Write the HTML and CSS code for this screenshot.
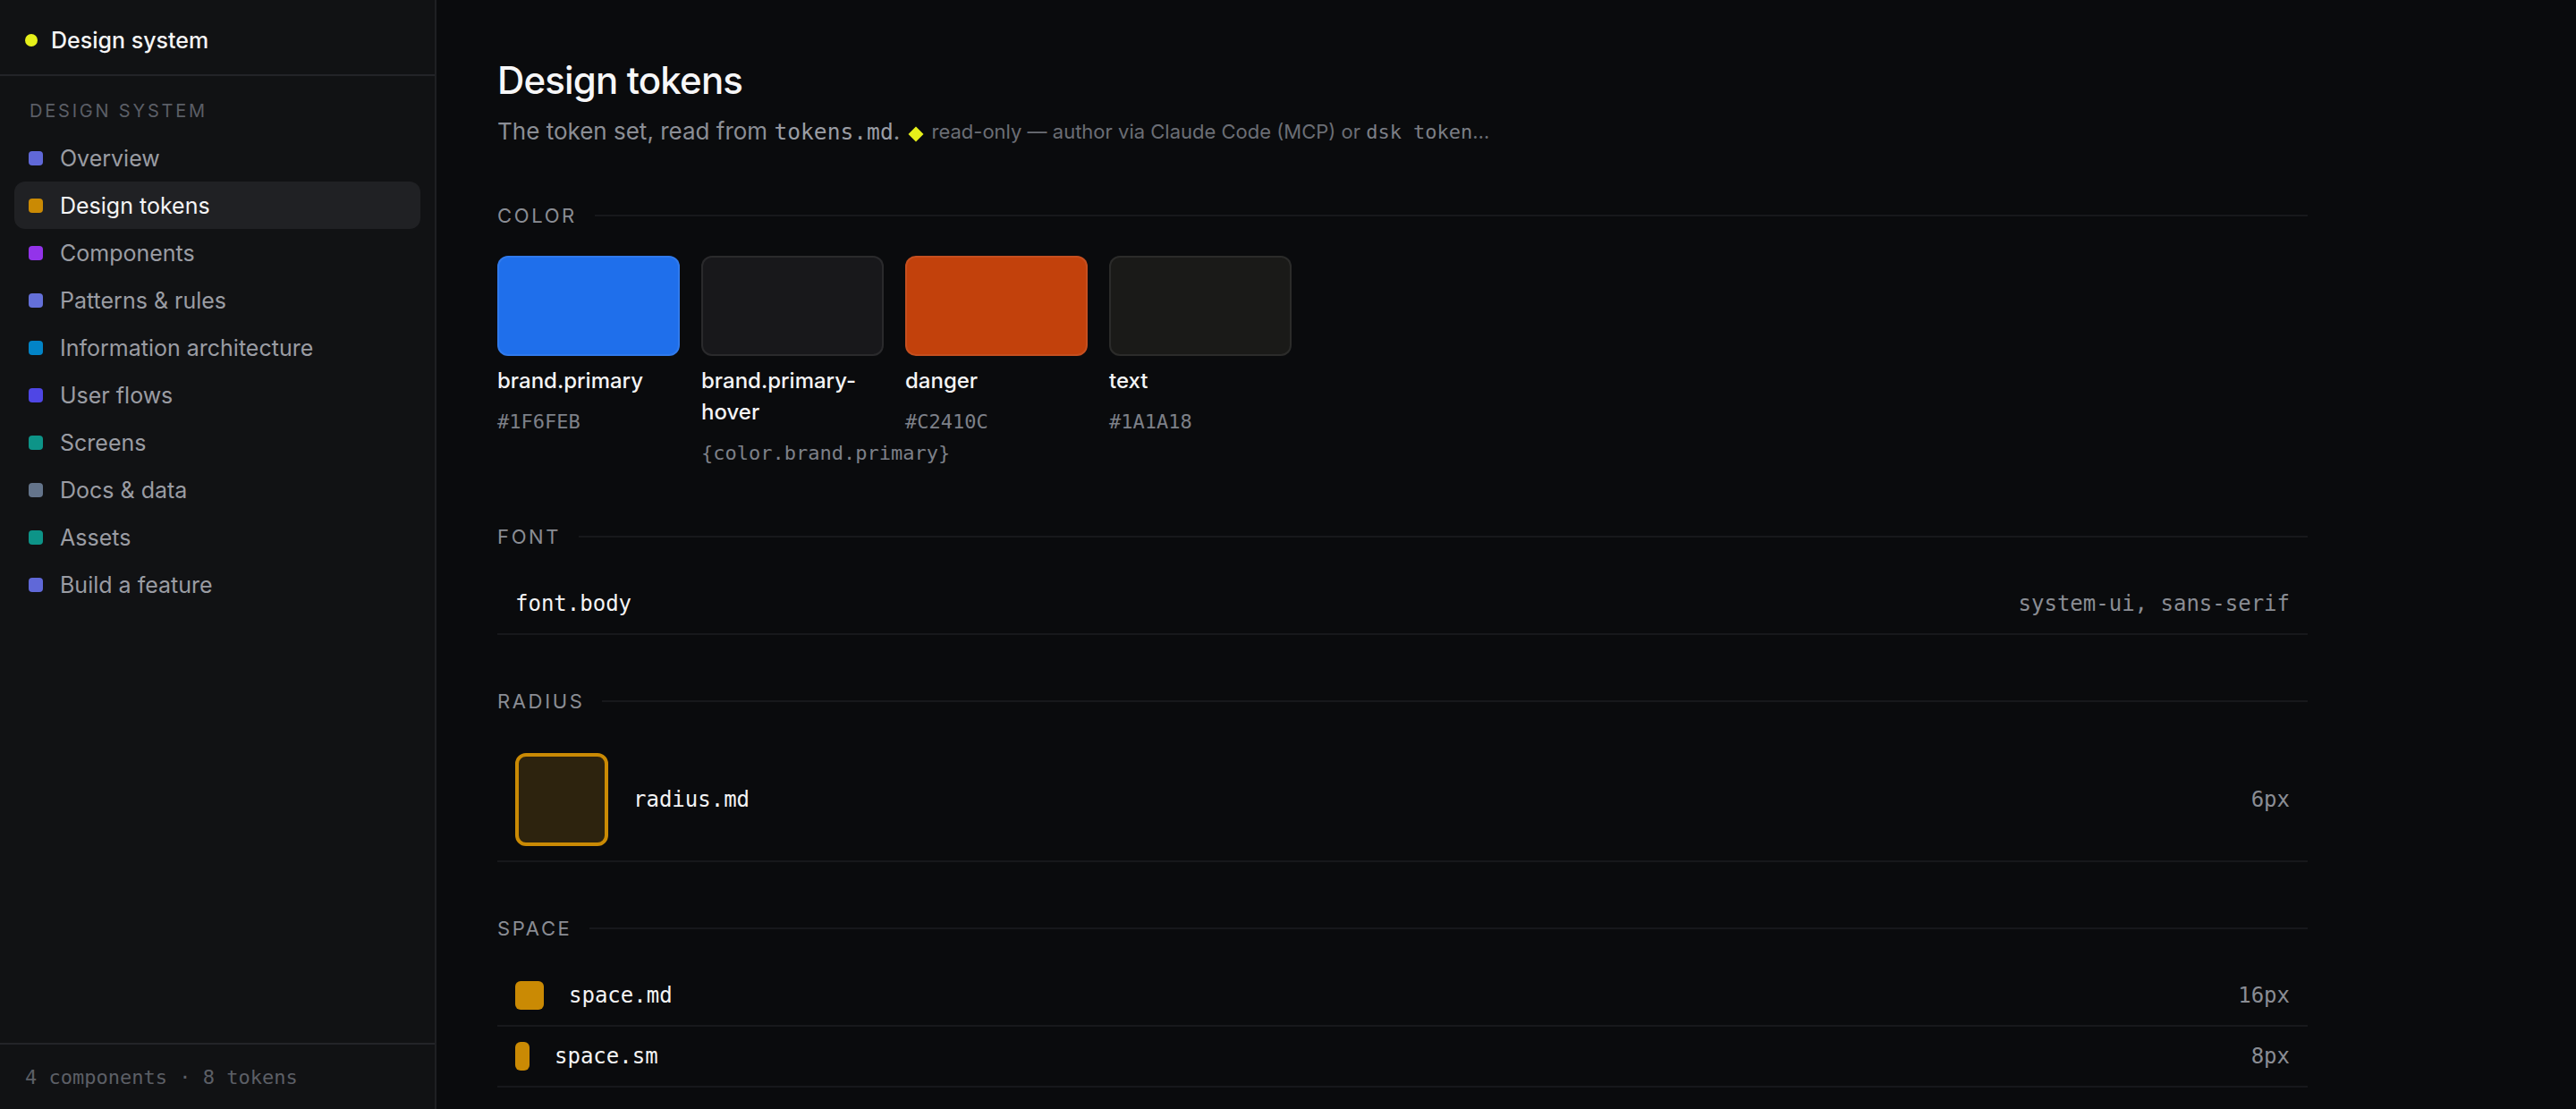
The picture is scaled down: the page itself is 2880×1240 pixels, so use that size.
FILE: index.html
```html
<!DOCTYPE html>
<html lang="en">
<head>
    <meta charset="UTF-8">
    <meta name="viewport" content="width=device-width, initial-scale=1.0">
    <title>Design tokens</title>
    <link rel="stylesheet" href="styles.css">
</head>
<body>
    <div class="app">
        <aside class="sidebar">
            <div class="brand"><span class="brand-dot"></span>Design system</div>

            <nav class="nav">
                <div class="nav-label">Design system</div>
                <a class="nav-item"><span class="sq" style="background:#6068d8"></span>Overview</a>
                <a class="nav-item active"><span class="sq" style="background:#ca8a04"></span>Design tokens</a>
                <a class="nav-item"><span class="sq" style="background:#9333ea"></span>Components</a>
                <a class="nav-item"><span class="sq" style="background:#6470d9"></span>Patterns &amp; rules</a>
                <a class="nav-item"><span class="sq" style="background:#0284c7"></span>Information architecture</a>
                <a class="nav-item"><span class="sq" style="background:#4f46e5"></span>User flows</a>
                <a class="nav-item"><span class="sq" style="background:#0d9488"></span>Screens</a>
                <a class="nav-item"><span class="sq" style="background:#64748b"></span>Docs &amp; data</a>
                <a class="nav-item"><span class="sq" style="background:#0d9488"></span>Assets</a>
                <a class="nav-item"><span class="sq" style="background:#6068d8"></span>Build a feature</a>
            </nav>

            <div class="sidebar-foot">4 components · 8 tokens</div>
        </aside>

        <main class="main">
            <div class="page">
                <h1>Design tokens</h1>
                <p class="lead">
                    The token set, read from <code>tokens.md</code>.
                    <span class="diamond"></span><span class="note">read-only — author via Claude Code (MCP) or <code>dsk tokens set &lt;name&gt; &lt;value&gt;</code></span>
                </p>

                <section class="group group-first">
                    <div class="group-head"><span>Color</span></div>
                    <div class="swatches">
                        <div class="swatch-card">
                            <div class="swatch" style="background:#1F6FEB"></div>
                            <div class="swatch-name">brand.primary</div>
                            <div class="swatch-val">#1F6FEB</div>
                        </div>
                        <div class="swatch-card">
                            <div class="swatch" style="background:#18181b"></div>
                            <div class="swatch-name">brand.primary-hover</div>
                            <div class="swatch-val">{color.brand.primary}</div>
                        </div>
                        <div class="swatch-card">
                            <div class="swatch" style="background:#C2410C"></div>
                            <div class="swatch-name">danger</div>
                            <div class="swatch-val">#C2410C</div>
                        </div>
                        <div class="swatch-card">
                            <div class="swatch" style="background:#1A1A18"></div>
                            <div class="swatch-name">text</div>
                            <div class="swatch-val">#1A1A18</div>
                        </div>
                    </div>
                </section>

                <section class="group group-font">
                    <div class="group-head"><span>Font</span></div>
                    <div class="token-row">
                        <span class="token-name">font.body</span>
                        <span class="token-val">system-ui, sans-serif</span>
                    </div>
                </section>

                <section class="group">
                    <div class="group-head"><span>Radius</span></div>
                    <div class="token-row">
                        <span class="radius-box"></span>
                        <span class="token-name">radius.md</span>
                        <span class="token-val">6px</span>
                    </div>
                </section>

                <section class="group">
                    <div class="group-head"><span>Space</span></div>
                    <div class="token-row">
                        <span class="space-bar" style="width:32px"></span>
                        <span class="token-name">space.md</span>
                        <span class="token-val">16px</span>
                    </div>
                    <div class="token-row">
                        <span class="space-bar" style="width:16px"></span>
                        <span class="token-name">space.sm</span>
                        <span class="token-val">8px</span>
                    </div>
                </section>
            </div>
        </main>
    </div>
</body>
</html>
```

FILE: styles.css
```css
* {
    box-sizing: border-box;
}

body {
    font-family: Inter, "Noto Sans", sans-serif;
    margin: 0;
    padding: 0;
    background-color: #0a0b0d;
    color: #f2f2f3;
}

code {
    font-family: "DejaVu Sans Mono", monospace;
    font-size: 24.6px;
}

.app {
    display: flex;
    height: 100vh;
    overflow: hidden;
}

/* sidebar */

.sidebar {
    width: 488px;
    flex-shrink: 0;
    display: flex;
    flex-direction: column;
    background-color: #111214;
    border-right: 2px solid #1f2023;
}

.brand {
    height: 85px;
    display: flex;
    align-items: center;
    gap: 15px;
    padding: 6px 28px 0;
    font-size: 25px;
    font-weight: 500;
    color: #f4f4f5;
    border-bottom: 2px solid #232428;
}

.brand-dot {
    width: 14px;
    height: 14px;
    border-radius: 50%;
    background-color: #e6f01a;
}

.nav {
    flex: 1;
    padding: 24px 16px;
}

.nav-label {
    padding-left: 17px;
    margin-bottom: 11px;
    line-height: 30px;
    font-size: 20px;
    letter-spacing: 0.14em;
    text-transform: uppercase;
    color: #5b5e66;
}

.nav-item {
    display: flex;
    align-items: center;
    gap: 19px;
    height: 53px;
    padding: 0 16px;
    border-radius: 12px;
    font-size: 25px;
    color: #9a9ca3;
}

.nav-item.active {
    background-color: #202124;
    color: #f4f4f5;
}

.sq {
    width: 16px;
    height: 16px;
    border-radius: 4px;
    flex-shrink: 0;
}

.sidebar-foot {
    height: 74px;
    display: flex;
    align-items: center;
    padding: 0 28px;
    border-top: 2px solid #232428;
    font-family: "DejaVu Sans Mono", monospace;
    font-size: 22px;
    color: #5c5f66;
}

/* main */

.main {
    flex: 1;
    padding: 62px 0 0 68px;
}

.page {
    max-width: 2024px;
}

h1 {
    margin: 0;
    font-size: 42px;
    line-height: 56px;
    font-weight: 500;
    letter-spacing: -0.02em;
    color: #f7f7f8;
}

.lead {
    margin: 9px 0 0;
    line-height: 40px;
    font-size: 26px;
    color: #8b8e95;
    white-space: nowrap;
}

.lead code {
    color: #9a9da4;
}

.diamond {
    display: inline-block;
    width: 12px;
    height: 12px;
    margin: 0 12px 0 4px;
    background-color: #e6f01a;
    transform: rotate(45deg);
}

.note {
    display: inline-block;
    max-width: 630px;
    overflow: hidden;
    text-overflow: ellipsis;
    white-space: nowrap;
    vertical-align: bottom;
    font-size: 22px;
    color: #6b6e75;
}

.note code {
    font-size: 22px;
    color: #7c7f86;
}

.group {
    margin-top: 62px;
}

.group-first {
    margin-top: 61px;
}

.group-font {
    margin-top: 66px;
}

.group-head {
    display: flex;
    align-items: center;
    gap: 20px;
    height: 24px;
    margin-bottom: 30px;
    font-size: 22px;
    letter-spacing: 0.12em;
    text-transform: uppercase;
    color: #8a8d94;
}

.group-head::after {
    content: "";
    flex: 1;
    height: 2px;
    background-color: #17181b;
}

/* colour swatches */

.swatches {
    display: flex;
    gap: 24px;
    padding-top: 3px;
}

.swatch-card {
    width: 204px;
}

.swatch {
    height: 112px;
    border-radius: 12px;
    border: 2px solid rgba(255, 255, 255, 0.08);
}

.swatch-name {
    margin-top: 10px;
    font-size: 24px;
    line-height: 35px;
    font-weight: 500;
    color: #f4f4f5;
}

.swatch-val {
    margin-top: 14px;
    font-family: "DejaVu Sans Mono", monospace;
    font-size: 22px;
    line-height: 30px;
    color: #7d8088;
}

/* token rows */

.token-row {
    display: flex;
    align-items: center;
    gap: 28px;
    padding: 16px 20px;
    border-bottom: 2px solid #17181b;
    font-family: "DejaVu Sans Mono", monospace;
    font-size: 24px;
    line-height: 34px;
}

.token-name {
    color: #f4f4f5;
}

.token-val {
    margin-left: auto;
    color: #8a8d94;
}

.radius-box {
    width: 104px;
    height: 104px;
    border-radius: 12px;
    border: 4px solid #ca8a04;
    background-color: #2d230e;
}

.space-bar {
    height: 32px;
    border-radius: 6px;
    background-color: #ca8a04;
}
```
